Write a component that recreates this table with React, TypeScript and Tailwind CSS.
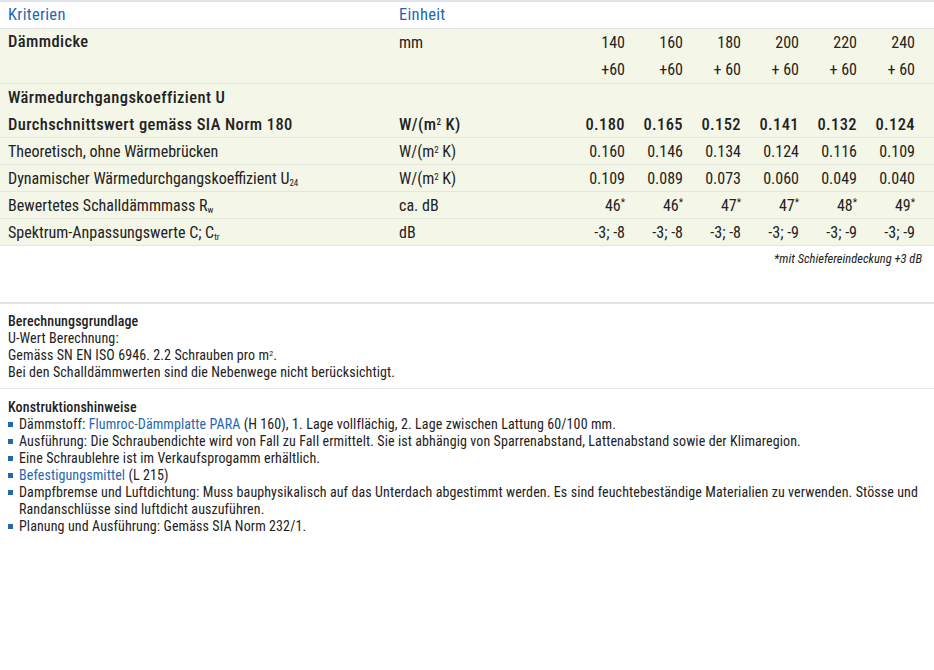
import React from "react";

const F = { fontFamily: 'Roboto, "Liberation Sans", sans-serif', fontStretch: "condensed" } as React.CSSProperties;

const Row = ({ label, unit, vals, bold, border = true }: { label: React.ReactNode; unit?: React.ReactNode; vals?: React.ReactNode[]; bold?: boolean; border?: boolean }) => {
  const h = border ? "h-[26px] pt-[2px]" : "h-[27px] pt-[2px]";
  return (
    <div className={`grid grid-cols-[391px_168px_repeat(6,58px)] pl-2 ${border ? "border-b border-[#e4e7dd]" : ""} ${bold ? "font-medium text-[16.5px] tracking-[0.4px]" : "text-[16px] tracking-normal"}`}>
      <div className={`${h} flex items-center`}>{label}</div>
      <div className={`${h} flex items-center`}>{unit}</div>
      {(vals || []).map((v, i) => (
        <div key={i} className={`${h} flex items-center justify-end`}>{v}</div>
      ))}
    </div>
  );
};

const Star = () => <span className="text-[10px] relative -top-[5px]">*</span>;

export default function App() {
  const dick = ["140", "160", "180", "200", "220", "240"];
  const plus = ["+60", "+60", "+ 60", "+ 60", "+ 60", "+ 60"];
  const wmk = <span>W/(m<sup className="text-[9px]">2</sup> K)</span>;
  return (
    <div className="w-[934px] h-[670px] bg-white text-[#222] text-[16.5px] leading-none tracking-[0.3px]" style={F}>
      <div className="border-t-2 border-[#dfe5ea]">
        <div className="grid grid-cols-[391px_168px] pl-2 h-[27px] items-center text-[#2467b0] border-b border-[#e2e5e8]">
          <div>Kriterien</div>
          <div>Einheit</div>
        </div>
        <div className="bg-[#f4f6e8]">
          <div className="grid grid-cols-[391px_168px_repeat(6,58px)] pl-2 border-b border-[#e4e7dd] text-[16px] tracking-normal">
            <div className="h-[27px] flex items-center font-medium text-[16.5px] tracking-[0.4px]">Dämmdicke</div>
            <div className="h-[27px] flex items-center">mm</div>
            {dick.map((v) => (
              <div key={v} className="h-[27px] flex items-center justify-end">{v}</div>
            ))}
            <div className="h-[27px]" />
            <div className="h-[27px]" />
            {plus.map((v, i) => (
              <div key={i} className="h-[27px] flex items-center justify-end">{v}</div>
            ))}
          </div>
          <Row label={<span>Wärmedurchgangskoeffizient U</span>} border={false} bold />
          <Row label="Durchschnittswert gemäss SIA Norm 180" unit={wmk} vals={["0.180", "0.165", "0.152", "0.141", "0.132", "0.124"]} bold />
          <Row label="Theoretisch, ohne Wärmebrücken" unit={wmk} vals={["0.160", "0.146", "0.134", "0.124", "0.116", "0.109"]} />
          <Row label={<span>Dynamischer Wärmedurchgangskoeffizient U<sub className="text-[9px]">24</sub></span>} unit={wmk} vals={["0.109", "0.089", "0.073", "0.060", "0.049", "0.040"]} />
          <Row label={<span>Bewertetes Schalldämmmass R<sub className="text-[9px]">w</sub></span>} unit="ca. dB" vals={["46", "46", "47", "47", "48", "49"].map((v, i) => <span key={i}>{v}<Star /></span>)} />
          <Row label={<span>Spektrum-Anpassungswerte C; C<sub className="text-[9px]">tr</sub></span>} unit="dB" vals={["-3; -8", "-3; -8", "-3; -8", "-3; -9", "-3; -9", "-3; -9"]} />
        </div>
        <div className="h-[26px] flex items-center justify-end pr-[12px] text-[12.5px] italic tracking-normal">*mit Schiefereindeckung +3 dB</div>
        <div className="h-[30px]" />
        <div className="border-t-2 border-[#dfe5ea] px-2 pt-[9px] pb-[7px] text-[14px] leading-[17px] tracking-[0.1px]">
          <div className="font-medium">Berechnungsgrundlage</div>
          <div>U-Wert Berechnung:</div>
          <div>Gemäss SN EN ISO 6946. 2.2 Schrauben pro m<sup className="text-[8px]">2</sup>.</div>
          <div>Bei den Schalldämmwerten sind die Nebenwege nicht berücksichtigt.</div>
        </div>
        <div className="border-t border-[#e2e6ea] px-2 pt-[10px] text-[14px] leading-[17px] tracking-[0.1px]">
          <div className="font-medium">Konstruktionshinweise</div>
          <ul>
            {[
              <>Dämmstoff: <span className="text-[#2467b0]">Flumroc-Dämmplatte PARA</span> (H 160), 1. Lage vollflächig, 2. Lage zwischen Lattung 60/100 mm.</>,
              <>Ausführung: Die Schraubendichte wird von Fall zu Fall ermittelt. Sie ist abhängig von Sparrenabstand, Lattenabstand sowie der Klimaregion.</>,
              <>Eine Schraublehre ist im Verkaufsprogamm erhältlich.</>,
              <><span className="text-[#2467b0]">Befestigungsmittel</span> (L 215)</>,
              <>Dampfbremse und Luftdichtung: Muss bauphysikalisch auf das Unterdach abgestimmt werden. Es sind feuchtebeständige Materialien zu verwenden. Stösse und Randanschlüsse sind luftdicht auszuführen.</>,
              <>Planung und Ausführung: Gemäss SIA Norm 232/1.</>,
            ].map((c, i) => (
              <li key={i} className="flex">
                <span className="w-[11px] shrink-0 pt-[6px]"><span className="block w-[5px] h-[5px] bg-[#2467b0]" /></span>
                <span>{c}</span>
              </li>
            ))}
          </ul>
        </div>
      </div>
    </div>
  );
}
